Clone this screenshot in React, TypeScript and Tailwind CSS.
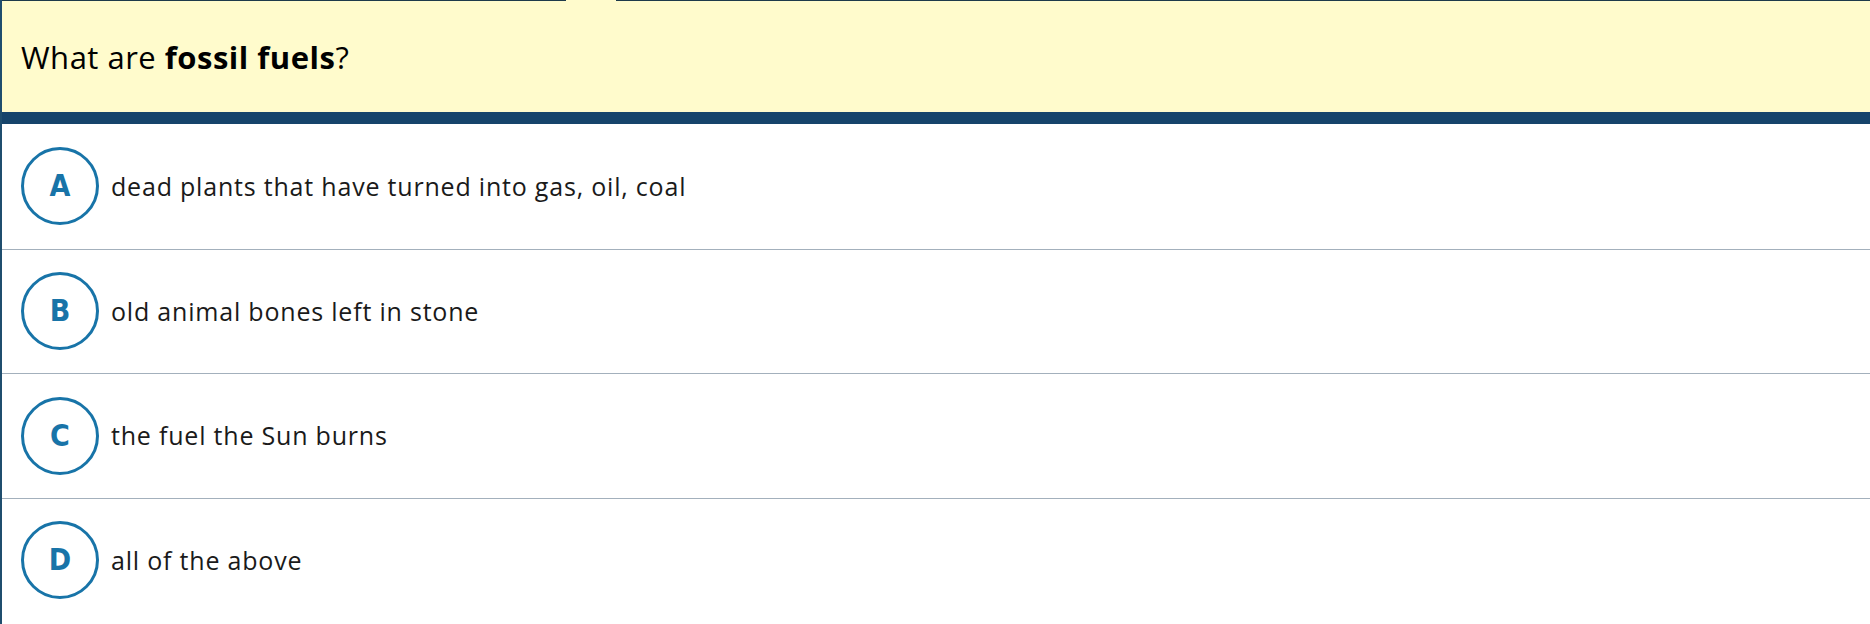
const answers = [
  { key: "A", text: "dead plants that have turned into gas, oil, coal" },
  { key: "B", text: "old animal bones left in stone" },
  { key: "C", text: "the fuel the Sun burns" },
  { key: "D", text: "all of the above" },
];

export default function App() {
  return (
    <main className="w-[1870px] h-[624px] overflow-hidden bg-white border-l-2 border-[#1f4d6e] font-['Open_Sans',sans-serif]">
      {/* question header */}
      <div className="relative h-[124px] bg-[#fffbcc] border-t border-[#1e3a4a] flex flex-col">
        <div aria-hidden className="absolute -top-px left-[564px] w-[50px] h-px bg-[#fffbcc]" />
        <div className="flex-1 flex items-center pl-[19px] pt-[2px]">
          <h1 className="text-[31px] text-black tracking-[0.5px]">
            What are <span className="font-bold">fossil fuels</span>?
          </h1>
        </div>
        <div className="h-[12px] bg-[#16446b]" />
      </div>

      {/* answers */}
      <div className="flex flex-col">
        {answers.map((a, i) => (
          <div
            key={a.key}
            className={`h-[124.5px] flex items-center gap-[12px] pl-[19px] ${i > 0 ? "border-t border-[#a3b0bc]" : ""}`}
          >
            <div className="w-[78px] h-[78px] shrink-0 rounded-full border-[3px] border-[#1874a8] flex items-center justify-center">
              <span className="text-[30px] leading-none font-bold text-[#1874a8] font-['DejaVu_Sans_Condensed','DejaVu_Sans',sans-serif]">
                {a.key}
              </span>
            </div>
            <span className="text-[25px] text-[#1a1a1a] tracking-[0.8px]">{a.text}</span>
          </div>
        ))}
      </div>
    </main>
  );
}
